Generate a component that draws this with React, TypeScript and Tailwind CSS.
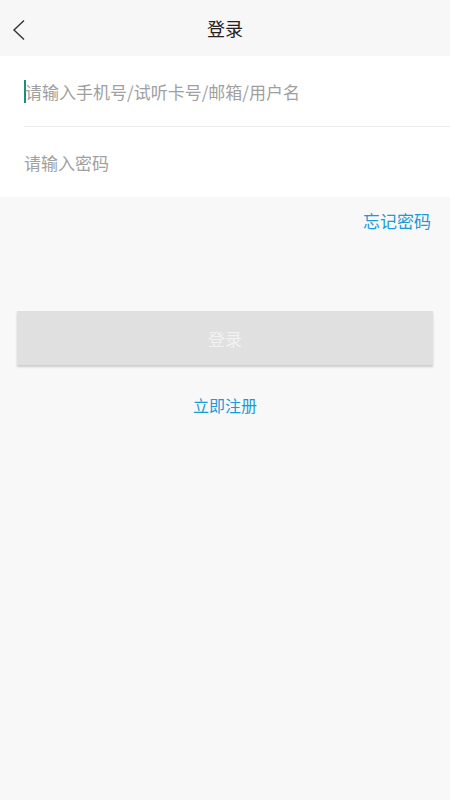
const Login = () => {
    return (
        <div
            className="w-[450px] h-[800px] bg-[#f8f8f8] flex flex-col"
            style={{ fontFamily: '"Noto Sans CJK SC", "Noto Sans", sans-serif' }}
        >
            {/* header */}
            <div className="h-[56px] flex items-center relative bg-[#f7f7f7]">
                <svg
                    className="absolute left-[11px] top-[19px]"
                    width="16"
                    height="22"
                    viewBox="0 0 16 22"
                    fill="none"
                >
                    <path d="M13 1.5 L3 11 L13 20.5" stroke="#333" strokeWidth="1.4" />
                </svg>
                <span className="w-full text-center text-[18px] text-[#222] leading-none">登录</span>
            </div>

            {/* inputs */}
            <div className="bg-white flex flex-col">
                <div className="h-[70px] flex items-center pl-6">
                    <span className="w-[2px] h-[23px] bg-[#1b8f7a] -mr-[1px]" />
                    <span className="text-[17px] text-[#a0a0a0] leading-none">请输入手机号/试听卡号/邮箱/用户名</span>
                </div>
                <div className="ml-6 h-px bg-[#ebebeb]" />
                <div className="h-[70px] flex items-center pl-6">
                    <span className="text-[17px] text-[#a0a0a0] leading-none">请输入密码</span>
                </div>
            </div>

            <div className="flex justify-end pr-[19px] pt-[15px]">
                <span className="text-[17px] text-[#1a9ad6] leading-none">忘记密码</span>
            </div>

            <div className="px-[17px] mt-[82px]">
                <div className="h-[54px] bg-[#e0e0e0] flex items-center justify-center shadow-[0_2px_2px_rgba(0,0,0,0.18)]">
                    <span className="text-[17px] text-[#f2f2f2] leading-none">登录</span>
                </div>
            </div>

            <div className="flex justify-center mt-[32px]">
                <span className="text-[16px] text-[#1a9ad6] leading-none">立即注册</span>
            </div>
        </div>
    )
}

export default function App() {
    return <Login />
}
